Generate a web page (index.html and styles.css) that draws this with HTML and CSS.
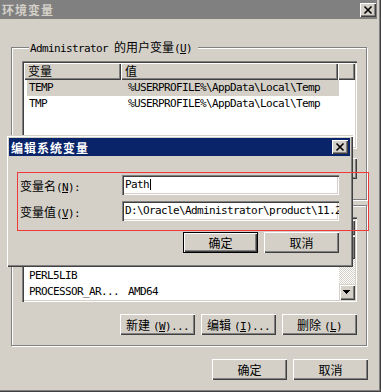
FILE: index.html
```html
<!DOCTYPE html>
<html lang="zh-CN">
<head>
    <meta charset="UTF-8">
    <title>环境变量</title>
    <link rel="stylesheet" href="styles.css">
</head>
<body>

<div class="screen">
    <div class="window">
        <div class="titlebar inactive">
            <span class="title">环境变量</span>
            <span class="close-btn"><svg width="16" height="14" viewBox="0 0 16 14"><path d="M4.5 3.5l7 7M11.5 3.5l-7 7"/></svg></span>
        </div>

        <div class="win-body">
            <!-- user variables -->
            <fieldset class="group user-group">
                <legend><span class="mono">Administrator </span>的用户变量<span class="mono">(<u>U</u>)</span></legend>
                <div class="listview user-list">
                    <div class="lv-main">
                        <div class="lv-header">
                            <div class="hd col1">变量</div>
                            <div class="hd col2">值</div>
                            <div class="hd filler"></div>
                        </div>
                        <div class="lv-row selected"><span class="cell c1">TEMP</span><span class="cell c2">%USERPROFILE%\AppData\Local\Temp</span></div>
                        <div class="lv-row"><span class="cell c1">TMP</span><span class="cell c2">%USERPROFILE%\AppData\Local\Temp</span></div>
                    </div>
                </div>
                <!-- these buttons sit under the edit dialog, only their right edge shows -->
                <div class="btn-row">
                    <button class="btn"></button>
                    <button class="btn"></button>
                    <button class="btn"></button>
                </div>
            </fieldset>

            <!-- system variables (top part is covered by the dialog) -->
            <fieldset class="group sys-group">
                <legend></legend>
                <div class="listview sys-list">
                    <div class="lv-main">
                        <div class="lv-header">
                            <div class="hd col1"></div>
                            <div class="hd col2"></div>
                            <div class="hd filler"></div>
                        </div>
                        <div class="lv-row"></div>
                        <div class="lv-row"></div>
                        <div class="lv-row"><span class="cell c1">PERL5LIB</span><span class="cell c2"></span></div>
                        <div class="lv-row"><span class="cell c1">PROCESSOR_AR...</span><span class="cell c2">AMD64</span></div>
                    </div>
                    <div class="scrollbar">
                        <div class="sb-btn"><svg width="16" height="16" viewBox="0 0 16 16"><path d="M4 10h7v-1h-1v-1h-1v-1h-1v-1h-1v1h-1v1h-1v1h-1z"/></svg></div>
                        <div class="sb-thumb"></div>
                        <div class="sb-track"></div>
                        <div class="sb-btn"><svg width="16" height="16" viewBox="0 0 16 16"><path d="M4 6h7v1h-1v1h-1v1h-1v1h-1v-1h-1v-1h-1v-1h-1z"/></svg></div>
                    </div>
                </div>
                <div class="btn-row">
                    <button class="btn">新建<span class="key">(<u>W</u>)...</span></button>
                    <button class="btn">编辑<span class="key">(<u>I</u>)...</span></button>
                    <button class="btn">删除<span class="key">(<u>L</u>)</span></button>
                </div>
            </fieldset>

            <div class="footer">
                <button class="btn">确定</button>
                <button class="btn">取消</button>
            </div>
        </div>
    </div>

    <!-- edit dialog on top -->
    <div class="dialog">
        <div class="titlebar">
            <span class="title">编辑系统变量</span>
            <span class="close-btn"><svg width="16" height="14" viewBox="0 0 16 14"><path d="M4.5 3.5l7 7M11.5 3.5l-7 7"/></svg></span>
        </div>
        <div class="dlg-body">
            <div class="field">
                <label>变量名<span class="mono">(<u>N</u>):</span></label>
                <div class="textbox mono">Path<span class="caret"></span></div>
            </div>
            <div class="field">
                <label>变量值<span class="mono">(<u>V</u>):</span></label>
                <div class="textbox mono">D:\Oracle\Administrator\product\11.2.0\dbhome_1\bin;</div>
            </div>
            <div class="dlg-buttons">
                <button class="btn default">确定</button>
                <button class="btn">取消</button>
            </div>
        </div>
    </div>

    <div class="mark"></div>
</div>

</body>
</html>
```

FILE: styles.css
```css
body {
    margin: 0;
    background-color: #d4d0c8;
    font-family: "Noto Sans CJK SC", sans-serif;
    font-size: 12px;
    color: #000;
}
.screen {
    position: relative;
    width: 381px;
    height: 392px;
    overflow: hidden;
}
.window {
    width: 381px;
    height: 392px;
    box-sizing: border-box;
    padding-right: 4px;
    background-color: #d4d0c8;
    box-shadow: inset -1px -1px #404040, inset -2px -2px #808080;
}
.mono {
    font-family: "DejaVu Sans Mono", monospace;
    font-size: 11px;
    letter-spacing: -0.62px;
}

/* title bars */
.titlebar {
    display: flex;
    align-items: center;
    justify-content: space-between;
    height: 19px;
    padding: 0 1px 0 2px;
    background-color: #0a246a;
    color: #fff;
}
.titlebar.inactive {
    background-color: #808080;
    color: #d4d0c8;
}
.title {
    font-weight: bold;
    letter-spacing: 1px;
}
.close-btn {
    width: 16px;
    height: 14px;
    background-color: #d4d0c8;
    box-shadow: inset 1px 1px #fff, inset -1px -1px #404040, inset -2px -2px #808080;
}
.close-btn svg {
    display: block;
}
.close-btn path {
    fill: none;
    stroke: #000;
    stroke-width: 1.6;
}

/* group boxes */
.win-body {
    padding: 21px 9px 0 11px;
}
.group {
    width: 356px;
    box-sizing: border-box;
    margin: 0;
    min-inline-size: 0;
    border: 1px solid #808080;
    box-shadow: inset 1px 1px #fff, 1px 1px #fff;
}
.user-group {
    padding: 6px 9px 20px 10px;
}
.sys-group {
    margin-top: -1px;
    padding: 5px 9px 10px 10px;
}
.group legend {
    min-height: 13px;
    margin-left: 7px;
    padding: 0 6px 0 1px;
    line-height: 13px;
    background-color: #d4d0c8;
}

/* list views */
.listview {
    display: flex;
    padding: 2px;
    box-sizing: border-box;
    background-color: #fff;
    box-shadow: inset 1px 1px #808080, inset 2px 2px #404040, inset -1px -1px #fff, inset -2px -2px #d4d0c8;
}
.user-list {
    height: 88px;
}
.sys-list {
    height: 85px;
}
.lv-main {
    flex: 1;
    min-width: 0;
    overflow: hidden;
}
.lv-header {
    display: flex;
    height: 17px;
}
.hd {
    box-sizing: border-box;
    padding-left: 4px;
    line-height: 16px;
    background-color: #d4d0c8;
    box-shadow: inset 1px 1px #fff, inset -1px -1px #404040, inset -2px -2px #808080;
}
.hd.col1 {
    width: 97px;
}
.hd.col2 {
    width: 217px;
}
.hd.filler {
    flex: 1;
}
.lv-row {
    display: flex;
    width: 312px;
    height: 16px;
    margin-left: 3px;
    line-height: 16px;
    white-space: nowrap;
    font-family: "DejaVu Sans Mono", monospace;
    font-size: 11px;
    letter-spacing: -0.62px;
}
.lv-row.selected {
    background-color: #d4d0c8;
}
.c1 {
    width: 93px;
    padding-left: 2px;
    overflow: hidden;
}
.c2 {
    padding-left: 6px;
}

/* scrollbar */
.scrollbar {
    display: flex;
    flex-direction: column;
    width: 16px;
    background: repeating-conic-gradient(#fff 0 25%, #d4d0c8 0 50%) 0 0 / 2px 2px;
}
.sb-btn, .sb-thumb {
    background-color: #d4d0c8;
    box-shadow: inset 1px 1px #d4d0c8, inset 2px 2px #fff, inset -1px -1px #404040, inset -2px -2px #808080;
}
.sb-btn {
    height: 16px;
}
.sb-btn svg {
    display: block;
}
.sb-thumb {
    height: 24px;
}
.sb-track {
    flex: 1;
}

/* buttons */
.btn {
    width: 75px;
    height: 21px;
    padding: 0;
    border: none;
    background-color: #d4d0c8;
    box-shadow: inset 1px 1px #fff, inset -1px -1px #404040, inset -2px -2px #808080;
    font: inherit;
    color: #000;
}
.btn.default {
    border: 1px solid #000;
}
.btn .key {
    padding-left: 3px;
    font-family: "DejaVu Sans Mono", monospace;
    font-size: 11px;
    letter-spacing: -0.62px;
}
.btn-row {
    display: flex;
    justify-content: flex-end;
    gap: 6px;
    margin-top: 9px;
}
.sys-group .btn-row {
    margin-top: 12px;
}
.footer {
    display: flex;
    justify-content: flex-end;
    gap: 6px;
    margin-top: 13px;
}

/* edit dialog */
.dialog {
    position: absolute;
    left: 6px;
    top: 135px;
    width: 347px;
    height: 132px;
    box-sizing: border-box;
    padding: 3px;
    background-color: #d4d0c8;
    box-shadow: inset 1px 1px #d4d0c8, inset 2px 2px #fff, inset -1px -1px #404040, inset -2px -2px #808080;
}
.dialog .titlebar {
    height: 18px;
    padding: 0 2px;
}
.dlg-body {
    padding: 19px 11px 0 11px;
}
.field {
    display: flex;
    align-items: center;
    height: 20px;
}
.field + .field {
    margin-top: 6px;
}
.field label {
    flex: 1;
}
.textbox {
    width: 217px;
    height: 20px;
    box-sizing: border-box;
    padding: 0 2px 0 3px;
    line-height: 20px;
    white-space: nowrap;
    overflow: hidden;
    background-color: #fff;
    box-shadow: inset 1px 1px #808080, inset 2px 2px #404040, inset -1px -1px #fff, inset -2px -2px #d4d0c8;
}
.caret {
    display: inline-block;
    width: 1px;
    height: 11px;
    margin-left: 1px;
    vertical-align: -2px;
    background-color: #000;
}
.dlg-buttons {
    display: flex;
    justify-content: flex-end;
    gap: 6px;
    margin-top: 11px;
}

/* red annotation box */
.mark {
    position: absolute;
    left: 17px;
    top: 172px;
    width: 352px;
    height: 59px;
    box-sizing: border-box;
    border: 1px solid #f03a3a;
}
```
